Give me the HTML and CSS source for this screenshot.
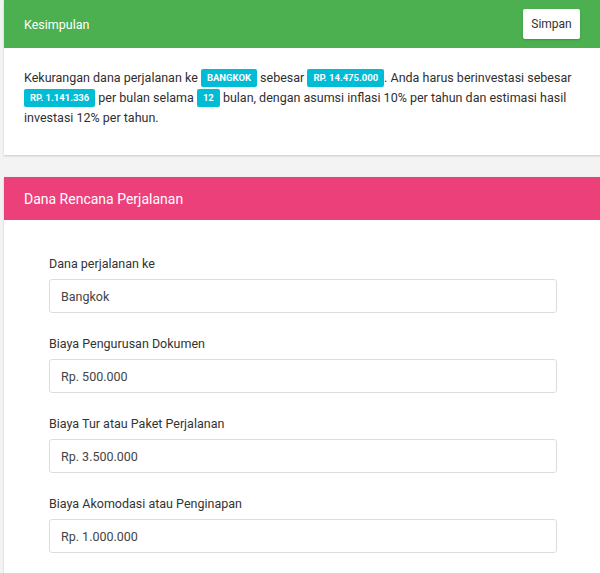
FILE: index.html
```html
<!DOCTYPE html>
<html lang="id">
<head>
<meta charset="utf-8">
<link rel="stylesheet" href="styles.css">
</head>
<body>
<div class="page">
  <div class="card">
    <div class="card-header header-green">
      <span class="card-title">Kesimpulan</span>
      <button class="btn">Simpan</button>
    </div>
    <div class="card-body summary">
      <p>Kekurangan dana perjalanan ke <span class="badge">Bangkok</span> sebesar <span class="badge">Rp. 14.475.000</span>. Anda harus berinvestasi sebesar <span class="badge">Rp. 1.141.336</span> per bulan selama <span class="badge">12</span> bulan, dengan asumsi inflasi 10% per tahun dan estimasi hasil investasi 12% per tahun.</p>
    </div>
  </div>

  <div class="card">
    <div class="card-header header-pink">
      <span class="card-title large">Dana Rencana Perjalanan</span>
    </div>
    <div class="card-body form">
      <div class="form-group">
        <label>Dana perjalanan ke</label>
        <div class="input">Bangkok</div>
      </div>
      <div class="form-group">
        <label>Biaya Pengurusan Dokumen</label>
        <div class="input">Rp. 500.000</div>
      </div>
      <div class="form-group">
        <label>Biaya Tur atau Paket Perjalanan</label>
        <div class="input">Rp. 3.500.000</div>
      </div>
      <div class="form-group">
        <label>Biaya Akomodasi atau Penginapan</label>
        <div class="input">Rp. 1.000.000</div>
      </div>
    </div>
  </div>
</div>
</body>
</html>
```

FILE: styles.css
```css
html, body {
  margin: 0;
  padding: 0;
  overflow: hidden;
}
body {
  background: #f3f3f3;
  font-family: Roboto, "Noto Sans", Arial, sans-serif;
  font-size: 12.5px;
  color: #2f2f2f;
}
.page {
  width: 598px;
  padding-left: 4px;
  display: flex;
  flex-direction: column;
  gap: 22px;
}
.card {
  background: #fff;
  box-shadow: 0 1px 2px rgba(0, 0, 0, 0.18);
}
.card-header {
  display: flex;
  align-items: center;
  justify-content: space-between;
  padding: 0 22px 0 20px;
}
.header-green {
  background: #4caf50;
  height: 48px;
}
.header-pink {
  background: #ec407a;
  height: 43px;
}
.card-title {
  color: #fff;
  font-size: 12.5px;
}
.card-title.large {
  font-size: 14px;
}
.btn {
  background: #fff;
  border: none;
  border-radius: 2px;
  height: 30px;
  width: 57px;
  padding: 0;
  font-family: inherit;
  font-size: 12px;
  color: #333;
  box-shadow: 0 1px 2px rgba(0, 0, 0, 0.16);
}
.summary {
  padding: 20px 20px 27px 20px;
}
.summary p {
  margin: 0;
  line-height: 20px;
}
.badge {
  display: inline-block;
  background: #00bcd4;
  color: #fff;
  font-size: 9.5px;
  font-weight: 700;
  text-transform: uppercase;
  padding: 4px 6px;
  line-height: 10px;
  border-radius: 2px;
  vertical-align: 1px;
}
.form {
  padding: 35px 45px 20px 45px;
  display: flex;
  flex-direction: column;
  gap: 22px;
}
.form-group {
  display: flex;
  flex-direction: column;
  gap: 6px;
}
.form-group label {
  line-height: 18px;
  color: #333;
}
.input {
  height: 32px;
  border: 1px solid #ddd;
  border-radius: 3px;
  padding: 0 11px;
  display: flex;
  align-items: center;
  color: #444;
}
```
